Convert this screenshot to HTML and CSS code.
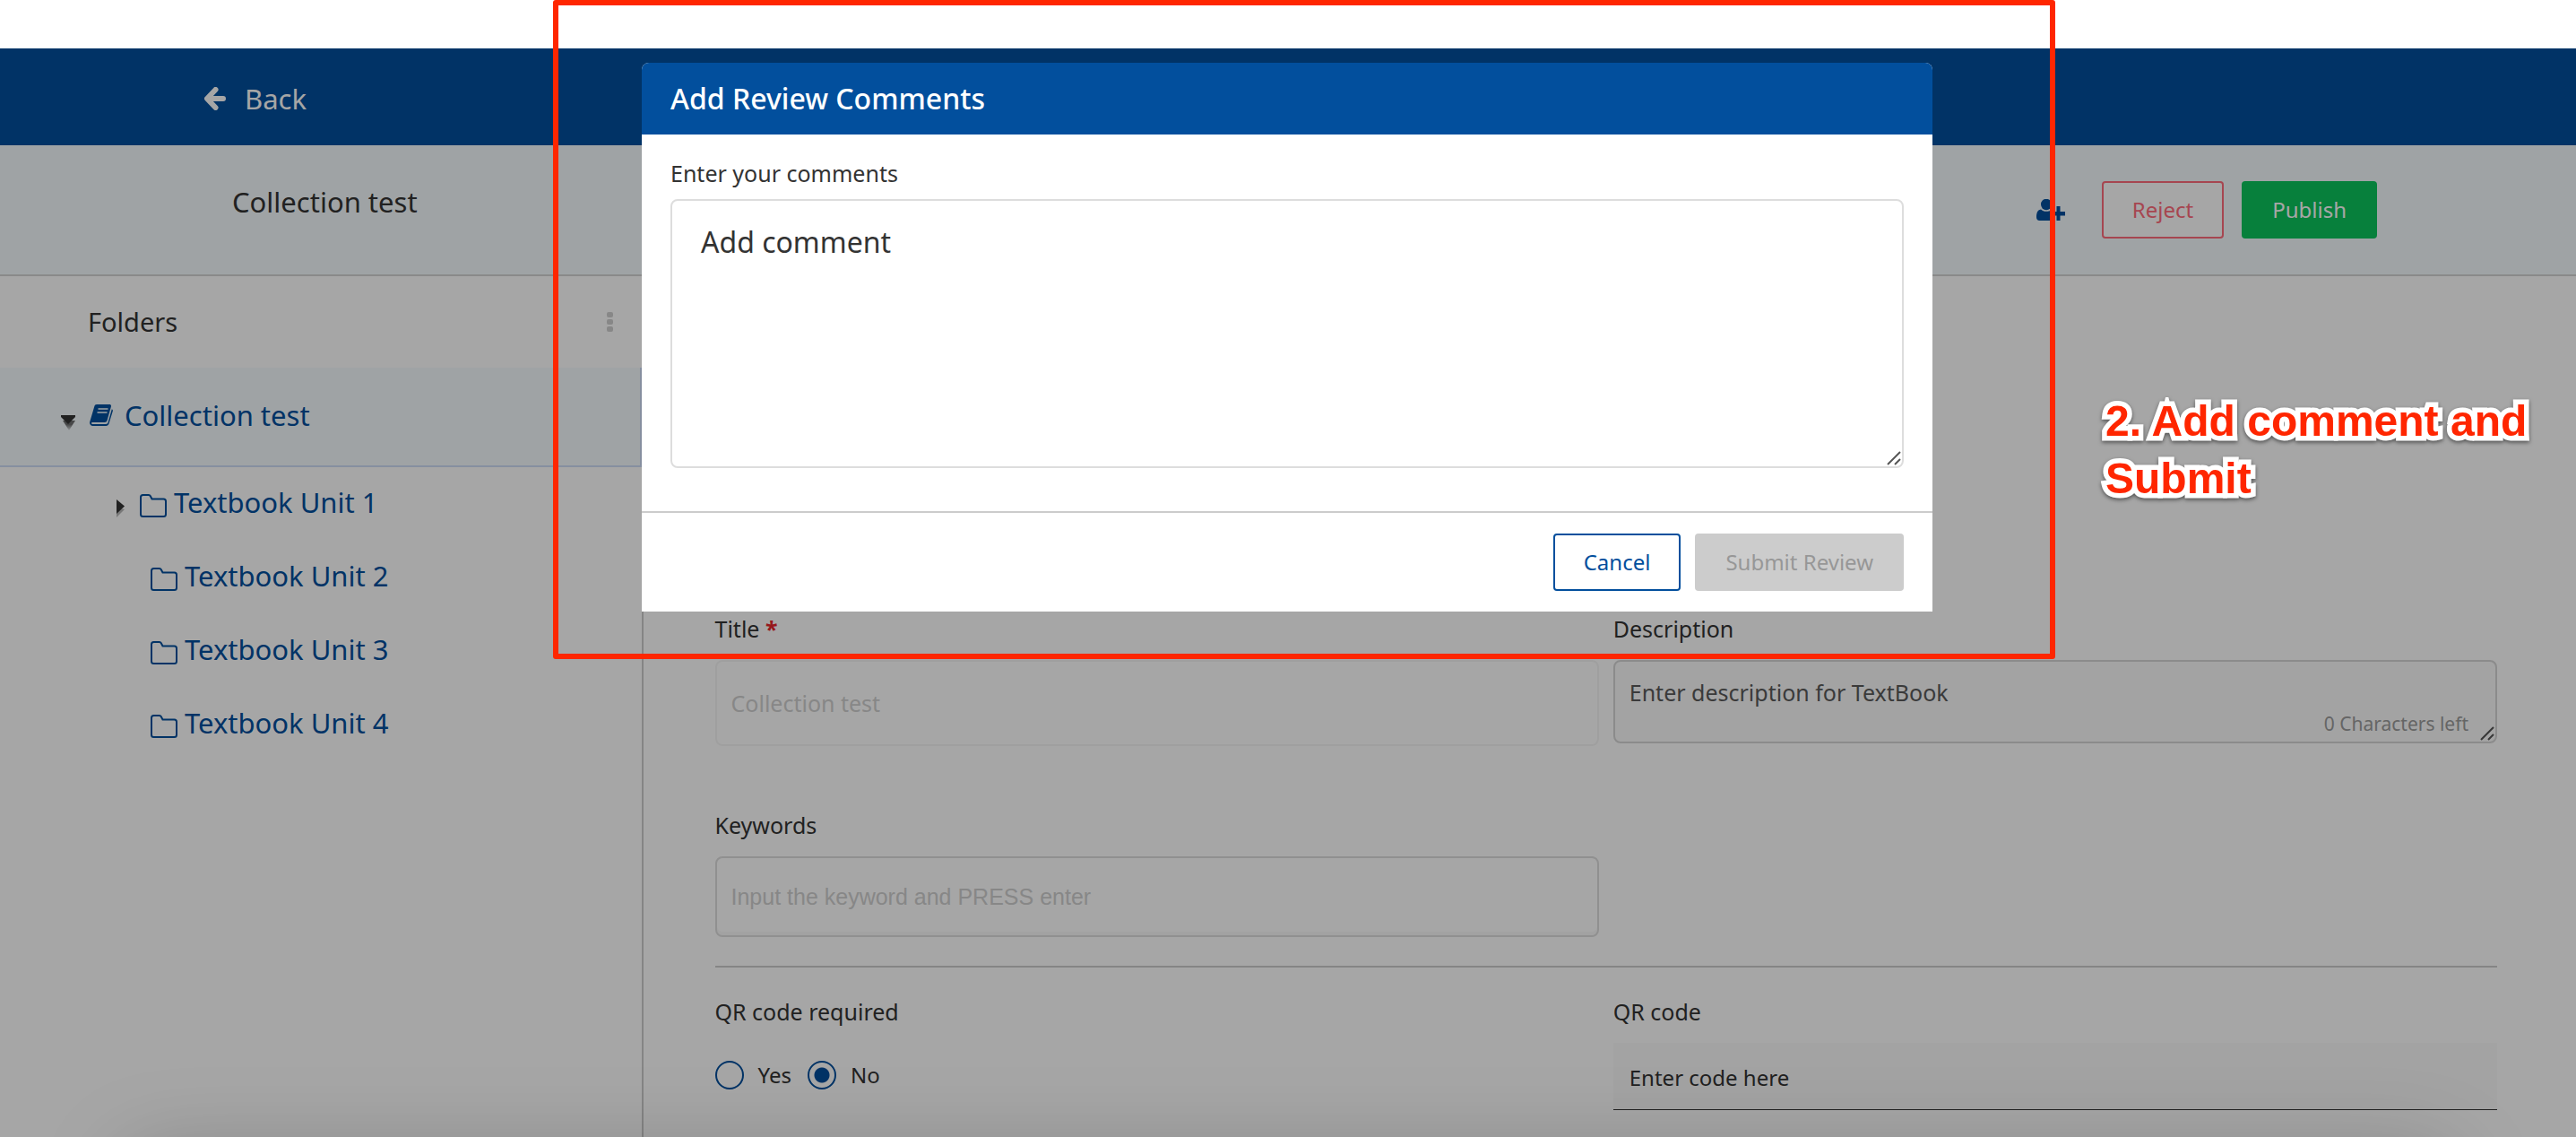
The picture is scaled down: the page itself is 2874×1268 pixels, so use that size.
FILE: index.html
```html
<!DOCTYPE html>
<html lang="en">
<head>
<meta charset="utf-8">
<title>Collection test - Review</title>
<link rel="stylesheet" href="styles.css">
</head>
<body>
<div class="page">
  <header class="topbar">
    <a class="back" href="#">
      <svg class="back-icon" viewBox="0 0 24 26" aria-hidden="true"><path d="M12.500 3 3 13 12.500 23M4 13H21" fill="none" stroke="currentColor" stroke-width="6" stroke-linecap="round" stroke-linejoin="round"/></svg>
      <span>Back</span>
    </a>
  </header>

  <div class="subheader">
    <h1 class="subheader-title">Collection test</h1>
    <div class="actions">
      <button class="icon-button" type="button" aria-label="Add collaborator">
        <svg viewBox="0 0 32 24" width="32" height="24" aria-hidden="true"><ellipse cx="11" cy="6" rx="6" ry="6.200"/><path d="M5 11.500c1.500 1.600 3.500 2.300 6 2.300s4.500-.7 6-2.300c1.500.3 2.600 1 3.400 2.200v1.300H16v5h5v3.600c-.6.3-1.300.4-2 .4H3.500C1.300 24 0 22.600 0 20.300c0-4 .8-8.200 5-8.800z"/><path d="M22.500 8h4v6H32v4.500h-5.500V24h-4v-5.500H17V14h5.500z"/></svg>
      </button>
      <div class="button-row">
        <button class="button button-reject" type="button">Reject</button>
        <button class="button button-publish" type="button">Publish</button>
      </div>
    </div>
  </div>

  <div class="workspace">
    <aside class="sidebar">
      <div class="folders-head">
        <h2 class="folders-title">Folders</h2>
        <svg class="dots" viewBox="0 0 7 22" aria-hidden="true"><rect width="7" height="6" rx="2"/><rect y="8" width="7" height="6" rx="2"/><rect y="16" width="7" height="6" rx="2"/></svg>
      </div>
      <nav>
        <a class="tree-root" href="#">
          <svg class="caret-down" viewBox="0 0 16 17" aria-hidden="true"><defs><linearGradient id="fade" x1="0" y1="0" x2="0" y2="1"><stop offset="0.4" stop-color="#333" stop-opacity=".7"/><stop offset="1" stop-color="#333" stop-opacity=".1"/></linearGradient></defs><path d="M2 6h14L9 17z" fill="url(#fade)"/><path d="M0 0h16v2L8 10 0 2z" fill="#333"/></svg>
          <svg class="book" viewBox="0 0 26 24" aria-hidden="true"><path d="M8 0h14c1.500 0 2.300 1 1.900 2.500L19.500 18c-.4 1.300-1.300 2-2.700 2H4c-1.600 0-2.300.6-2 1.300.2.600.8.700 1.500.7h14.700c1.200 0 1.900-.5 2.300-1.700l4.300-15c1 .5 1.300 1.200 1 2.300L21.500 21.500c-.5 1.600-1.600 2.500-3.200 2.500H3.500C1.300 24-.5 22 .2 19.500L5.300 2.300C5.700.8 6.500 0 8 0z"/><path d="M9.500 5h11M8.500 9h11" stroke="#f5fafd" stroke-width="1.600"/></svg>
          <span>Collection test</span>
        </a>
        <a class="tree-item has-children" href="#">
          <svg class="caret-right" viewBox="0 0 9 20" aria-hidden="true"><path d="M0 9v11l9-9z" fill="#333" opacity=".35"/><path d="M0 0 9 7.500 0 16z" fill="#333"/></svg>
          <svg class="folder" viewBox="0 0 30 26" aria-hidden="true"><path d="M1 3.500C1 2 2 1 3.500 1h6.300c1 0 1.600.4 2 1.200L13.500 5.500h13C28 5.500 29 6.500 29 8v14.500c0 1.500-1 2.500-2.500 2.500h-23C2 25 1 24 1 22.500z"/></svg>
          <span>Textbook Unit 1</span>
        </a>
        <a class="tree-item" href="#">
          <svg class="folder" viewBox="0 0 30 26" aria-hidden="true"><path d="M1 3.500C1 2 2 1 3.500 1h6.300c1 0 1.600.4 2 1.200L13.500 5.500h13C28 5.500 29 6.500 29 8v14.500c0 1.500-1 2.500-2.500 2.500h-23C2 25 1 24 1 22.500z"/></svg>
          <span>Textbook Unit 2</span>
        </a>
        <a class="tree-item" href="#">
          <svg class="folder" viewBox="0 0 30 26" aria-hidden="true"><path d="M1 3.500C1 2 2 1 3.500 1h6.300c1 0 1.600.4 2 1.200L13.500 5.500h13C28 5.500 29 6.500 29 8v14.500c0 1.500-1 2.500-2.500 2.500h-23C2 25 1 24 1 22.500z"/></svg>
          <span>Textbook Unit 3</span>
        </a>
        <a class="tree-item" href="#">
          <svg class="folder" viewBox="0 0 30 26" aria-hidden="true"><path d="M1 3.500C1 2 2 1 3.500 1h6.300c1 0 1.600.4 2 1.200L13.500 5.500h13C28 5.500 29 6.500 29 8v14.500c0 1.500-1 2.500-2.500 2.500h-23C2 25 1 24 1 22.500z"/></svg>
          <span>Textbook Unit 4</span>
        </a>
      </nav>
    </aside>

    <main class="form">
      <div class="form-grid">
        <div class="field">
          <label for="title">Title <span class="required">*</span></label>
          <input class="input input-title" id="title" type="text" value="Collection test" disabled>
        </div>
        <div class="field">
          <label for="description">Description</label>
          <div class="area-wrap">
            <textarea class="description" id="description" placeholder="Enter description for TextBook"></textarea>
            <span class="chars-left">0 Characters left</span>
            <svg class="grip" viewBox="0 0 16 16" aria-hidden="true"><path d="M1 15 15 1M9 15l6-6"/></svg>
          </div>
        </div>
        <div class="field">
          <label for="keywords">Keywords</label>
          <input class="input input-keywords" id="keywords" type="text" placeholder="Input the keyword and PRESS enter">
        </div>
      </div>
      <div class="form-grid section">
        <fieldset class="field">
          <legend>QR code required</legend>
          <div class="radios">
            <label class="radio"><input type="radio" name="qr">Yes</label>
            <label class="radio"><input type="radio" name="qr" checked>No</label>
          </div>
        </fieldset>
        <div class="field">
          <label for="qrcode">QR code</label>
          <input class="input-code" id="qrcode" type="text" placeholder="Enter code here">
        </div>
      </div>
    </main>
  </div>
  <div class="bottom-shade"></div>

  <div class="overlay">
    <section class="modal" role="dialog" aria-labelledby="modal-title">
      <h2 class="modal-head" id="modal-title">Add Review Comments</h2>
      <div class="modal-body">
        <label for="comment">Enter your comments</label>
        <div class="area-wrap">
          <textarea class="comment" id="comment" placeholder="Add comment"></textarea>
          <svg class="grip" viewBox="0 0 16 16" aria-hidden="true"><path d="M1 15 15 1M9 15l6-6"/></svg>
        </div>
      </div>
      <div class="modal-foot">
        <button class="button button-cancel" type="button">Cancel</button>
        <button class="button button-submit" type="button" disabled>Submit Review</button>
      </div>
    </section>
  </div>

  <div class="callout-frame"></div>
  <p class="callout-text">2. Add comment and Submit</p>
</div>
</body>
</html>
```

FILE: styles.css
```css
* { box-sizing: border-box; }

body {
  margin: 0;
  background: #fff;
  color: #333;
  font-family: "Noto Sans", "Open Sans", sans-serif;
  font-size: 25px;
  line-height: 36px;
}

h1, h2, p { margin: 0; font-weight: 400; }
a { text-decoration: none; }
svg { display: block; flex: none; }
button, input, textarea { font-family: inherit; margin: 0; }
::placeholder { opacity: 1; }

.page {
  position: relative;
  display: flex;
  flex-direction: column;
  min-height: 100vh;
  padding-top: 54px;
  overflow: hidden;
}

/* Header bars */
.topbar {
  display: flex;
  align-items: center;
  height: 108px;
  padding: 3px 0 0 228px;
  background: #024f9d;
}
.back {
  display: flex;
  align-items: center;
  gap: 21px;
  color: #fff;
  font-size: 31px;
}
.back-icon { width: 24px; height: 26px; }

.subheader {
  display: flex;
  align-items: center;
  justify-content: space-between;
  height: 146px;
  padding: 0 222px 0 259px;
  background: #f5fafd;
  border-bottom: 2px solid #d4d4d4;
}
.subheader-title { font-size: 31px; margin-bottom: 18px; }
.actions { display: flex; align-items: center; gap: 41px; }
.button-row { display: flex; gap: 20px; }
.icon-button { padding: 0; border: 0; background: none; }
.icon-button svg { fill: #024f9d; }

.button {
  height: 64px;
  padding: 0 32px 2px;
  border: 2px solid transparent;
  border-radius: 4px;
  font-size: 24px;
}
.button-reject { background: #fff; color: #ff6c7c; border-color: #ff6c7c; }
.button-publish { background: #0bc55c; color: #fff; }
.button-cancel { background: #fff; color: #024f9d; border-color: #024f9d; }
.button-submit { background: #ccc; color: #979797; }

/* Folder tree */
.workspace { display: flex; flex: 1; }
.sidebar { width: calc(25% - 1px); border-right: 2px solid #ccc; }
.folders-head {
  display: flex;
  align-items: center;
  justify-content: space-between;
  height: 102px;
  padding: 0 32px 0 98px;
}
.folders-title { font-size: 29px; }
.dots { width: 7px; height: 22px; fill: #d0d0d0; }

.tree-root, .tree-item {
  display: flex;
  align-items: center;
  color: #024f9d;
  font-size: 31px;
}
.tree-root span, .tree-item span { padding-bottom: 4px; }
.tree-root {
  height: 111px;
  padding-left: 68px;
  background: #f5fafd;
  border: solid #cedcf6;
  border-width: 0 2px 2px 0;
}
.caret-down { width: 16px; height: 17px; margin: 14px 16px 0 0; }
.book { width: 26px; height: 24px; margin: 0 13px 4px 0; fill: #024f9d; }
.tree-item { height: 82px; padding-left: 168px; gap: 8px; }
.tree-item.has-children { padding-left: 130px; }
.caret-right { width: 9px; height: 20px; margin: 10px 9px 0 0; }
.folder {
  width: 30px;
  height: 26px;
  margin-top: 4px;
  fill: none;
  stroke: #024f9d;
  stroke-width: 2;
}

/* Form */
.form { flex: 1; padding: 375px 88px 0 80px; }
.form-grid {
  display: grid;
  grid-template-columns: 1fr 1fr;
  gap: 70px 16px;
}
.section {
  margin-top: 32px;
  padding-top: 31px;
  border-top: 2px solid #ccc;
}
.field { display: flex; flex-direction: column; gap: 17px; min-width: 0; }
fieldset { display: block; margin: 0; padding: 0; border: 0; }
fieldset.field { display: block; }
legend { padding: 0; margin-bottom: 17px; }
.required { color: #e8262b; font-weight: 700; }

.input {
  width: 100%;
  padding: 0 16px;
  border: 2px solid #ddd;
  border-radius: 8px;
  background: #fff;
  font-size: 25px;
}
.input-title { height: 96px; border-color: #f5f5f5; color: #d0d0d0; }
.input-keywords {
  height: 90px;
  box-shadow: inset 0 -4px 0 #f9f9f9;
  font-family: "Liberation Sans", Arial, sans-serif;
}
.input-keywords::placeholder { color: #d0d0d0; }

.area-wrap { position: relative; }
textarea {
  display: block;
  width: 100%;
  border: 2px solid #ddd;
  border-radius: 8px;
  resize: none;
}
.description {
  height: 93px;
  padding: 16px;
  border-color: #d6d6d6;
  background: #fafafa;
  font-size: 25px;
  line-height: 36px;
}
.description::placeholder { color: #5a5a5a; }
.chars-left {
  position: absolute;
  right: 32px;
  bottom: 8px;
  color: #9c9c9c;
  font-size: 21px;
  line-height: 28px;
}
.grip {
  position: absolute;
  right: 3px;
  bottom: 3px;
  width: 16px;
  height: 16px;
  fill: none;
  stroke: #555;
  stroke-width: 2;
}

.radios { display: flex; align-items: center; gap: 18px; height: 72px; }
.radio { display: flex; align-items: center; gap: 16px; font-size: 24px; }
.radio input {
  appearance: none;
  width: 32px;
  height: 32px;
  border: 2px solid #024f9d;
  border-radius: 50%;
}
.radio input:checked { background: radial-gradient(circle, #024f9d 8px, transparent 9px); }
.input-code {
  width: 100%;
  height: 75px;
  padding: 3px 18px 0;
  border: 0;
  border-bottom: 1px solid #333;
  background: #fafafa;
  font-size: 24px;
}
.input-code::placeholder { color: #333; }

.bottom-shade {
  position: absolute;
  top: calc(100% + 22px);
  left: 140px;
  right: 140px;
  height: 200px;
  border-radius: 20px;
  box-shadow: 0 0 100px rgba(0, 0, 0, .22);
}

/* Review dialog */
.overlay {
  position: absolute;
  inset: 54px 0 0;
  padding: 16px 2px 0 0;
  background: rgba(0, 0, 0, .35);
}
.modal {
  width: 1440px;
  max-width: 100%;
  margin: 0 auto;
  border-radius: 8px 8px 0 0;
  background: #fff;
  overflow: hidden;
}
.modal-head {
  padding: 0 32px;
  background: #024f9d;
  color: #fff;
  font-size: 32px;
  font-weight: 500;
  line-height: 80px;
}
.modal-body {
  display: flex;
  flex-direction: column;
  gap: 11px;
  padding: 25px 32px 48px;
}
.comment {
  height: 300px;
  padding: 24px 32px;
  font-size: 32px;
  line-height: 44px;
}
.comment::placeholder { color: #333; }
.modal-foot {
  display: flex;
  justify-content: flex-end;
  gap: 16px;
  padding: 23px 32px;
  border-top: 2px solid #ccc;
}

/* Tutorial callout */
.callout-frame {
  position: absolute;
  top: 0;
  left: calc(50% - 820px);
  width: 1676px;
  height: 735px;
  border: 6px solid #ff2600;
  border-radius: 3px;
  pointer-events: none;
}
.callout-text {
  position: absolute;
  top: 438px;
  left: calc(50% + 912px);
  width: 500px;
  color: #ff2600;
  font: 700 48px/64px "Liberation Sans", Arial, sans-serif;
  -webkit-text-stroke: 11px #fff;
  paint-order: stroke fill;
  filter: drop-shadow(0 2px 2px rgba(0, 0, 0, .5));
}
```
